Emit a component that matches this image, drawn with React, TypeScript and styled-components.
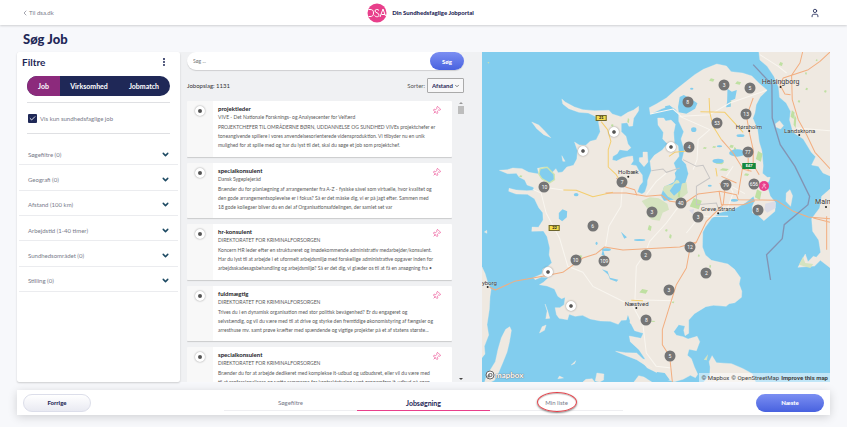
import React from "react";
import styled, { createGlobalStyle, css } from "styled-components";
import { Check, ChevronDown, ChevronLeft, EllipsisVertical, Pin, User } from "lucide-react";

const navy = "#1f2857";
const pink = "#e83f8b";
const grey = "#777a8a";

const GlobalStyle = createGlobalStyle`
  *, *::before, *::after { box-sizing: border-box; }
  body {
    margin: 0;
    background: #f7f8fb;
    color: ${navy};
    font-family: Lato, "Liberation Sans", sans-serif;
    font-size: 6px;
  }
  button, input, select { font-family: inherit; margin: 0; }
  h1, h2, h3, p { margin: 0; }
`;

const Page = styled.div`
  min-height: 100vh;
  display: flex;
  flex-direction: column;
`;

const Header = styled.header`
  display: grid;
  grid-template-columns: 1fr auto 1fr;
  align-items: center;
  height: 25px;
  padding: 0 27px 0 21px;
  background: #fff;
  box-shadow: 0 1px 2px rgba(0, 0, 0, 0.16);
`;

const BackLink = styled.a`
  display: flex;
  align-items: center;
  color: ${grey};
  text-decoration: none;
`;

const Brand = styled.div`
  display: flex;
  align-items: center;
  gap: 5px;
  font-weight: 900;
`;

const AccountButton = styled.button`
  justify-self: end;
  display: flex;
  padding: 0;
  border: 0;
  background: none;
  color: ${navy};
`;

const PageTitle = styled.h1`
  height: 27px;
  padding-left: 23px;
  font-size: 13px;
  line-height: 28px;
  font-weight: 900;
`;

const Columns = styled.main`
  display: grid;
  grid-template-columns: 163fr 302fr 348fr;
  height: 330px;
  margin: 0 17px;
  background: #f0f1f3;
`;

const FilterPanel = styled.section`
  background: #fff;
  border-radius: 2px;
  box-shadow: 0 1px 2px rgba(0, 0, 0, 0.18);
`;

const PanelHeader = styled.div`
  display: flex;
  align-items: center;
  justify-content: space-between;
  height: 20px;
  padding: 0 11px 0 5px;
`;

const PanelTitle = styled.h2`
  font-size: 10px;
  line-height: 20px;
  font-weight: 700;
`;

const IconButton = styled.button`
  display: flex;
  padding: 0;
  border: 0;
  background: none;
  color: ${navy};
`;

const Tabs = styled.div`
  display: grid;
  grid-template-columns: 33fr 58fr 52fr;
  height: 20px;
  margin: 4px 10px 6px;
  border-radius: 10px;
  overflow: hidden;
  background: ${navy};
`;

const Tab = styled.button<{ $active?: boolean }>`
  padding: 0;
  border: 0;
  background: ${(p) => (p.$active ? "#8c2a7c" : "transparent")};
  color: #fff;
  font-size: 7px;
  font-weight: 700;
`;

const CheckRow = styled.label`
  display: flex;
  align-items: center;
  gap: 3px;
  height: 32px;
  margin: 0 10px;
  padding: 0 1px;
  border-top: 1px solid #dfe0e3;
  border-bottom: 1px solid #dfe0e3;
  color: ${grey};
`;

const CheckBox = styled.span`
  display: grid;
  width: 9px;
  height: 9px;
  & > * { grid-area: 1 / 1; }
  input {
    appearance: none;
    width: 9px;
    height: 9px;
    margin: 0;
    border-radius: 1px;
    background: ${navy};
  }
  svg { place-self: center; color: #fff; pointer-events: none; }
`;

const FilterList = styled.div`
  display: grid;
  grid-auto-rows: 1fr;
  height: 152px;
  margin: 6px 2px 0;
`;

const FilterRow = styled.button`
  display: flex;
  align-items: center;
  justify-content: space-between;
  padding: 4px 8px 0 9px;
  border: 0;
  border-bottom: 1px solid #ebecef;
  background: none;
  color: ${grey};
  font-size: 6px;
  text-align: left;
  svg { color: #1d4a63; }
`;

const Results = styled.section`
  display: flex;
  flex-direction: column;
  min-width: 0;
  min-height: 0;
  padding: 0 18px 0 7px;
`;

const SearchForm = styled.form`
  display: flex;
  flex: none;
  height: 18px;
  border-radius: 9px;
  background: #fff;
  box-shadow: 0 1px 1px rgba(0, 0, 0, 0.14);
`;

const SearchInput = styled.input`
  flex: 1;
  min-width: 0;
  padding: 0 6px;
  border: 0;
  background: none;
  font-size: 5px;
  outline: none;
  &::placeholder { color: #777; opacity: 1; }
`;

const pill = css`
  border: 0;
  border-radius: 9px;
  height: 18px;
  padding: 0;
  font-size: 6px;
  font-weight: 900;
`;

const PrimaryButton = styled.button<{ $width: number }>`
  ${pill}
  width: ${(p) => p.$width}px;
  background: linear-gradient(#7b8ff2, #4862df);
  color: #fff;
`;

const SecondaryButton = styled.button`
  ${pill}
  width: 68px;
  border: 1px solid #dcdeea;
  background: linear-gradient(#fff, #e9eaf2);
  color: ${navy};
`;

const ResultsBar = styled.div`
  display: flex;
  flex: none;
  align-items: center;
  justify-content: space-between;
  height: 15px;
  margin: 8px 0;
  color: #333;
`;

const SortLabel = styled.label`
  display: flex;
  align-items: center;
  gap: 2px;
  color: #555;
`;

const SelectWrap = styled.span`
  display: grid;
  align-items: center;
  width: 37px;
  height: 15px;
  & > * { grid-area: 1 / 1; }
  svg { justify-self: end; margin-right: 4px; pointer-events: none; color: #555; }
`;

const SortSelect = styled.select`
  appearance: none;
  width: 100%;
  height: 15px;
  padding: 0 0 0 4px;
  border: 1px solid #aaa;
  border-radius: 1px;
  background: #f7f7f8;
  color: ${navy};
  font-size: 6px;
  font-weight: 700;
`;

const ScrollArea = styled.div`
  display: flex;
  flex: 1;
  min-height: 0;
  gap: 6px;
`;

const JobViewport = styled.div`
  flex: 1;
  min-width: 0;
  overflow: hidden;
`;

const JobList = styled.div`
  display: grid;
  grid-auto-rows: 1fr;
  gap: 6px;
  height: 302px;
`;

const Card = styled.article`
  display: grid;
  grid-template-columns: 26px minmax(0, 1fr) 14px;
  border-radius: 1px;
  overflow: hidden;
  background: linear-gradient(to right, #f8f8f8 26px, #fff 26px);
  box-shadow: 0 1px 1px rgba(0, 0, 0, 0.16);
`;

const dot = css`
  width: 10px;
  height: 10px;
  border: 3px solid #fff;
  border-radius: 50%;
  background: #555;
  box-shadow: 0 0 2px rgba(0, 0, 0, 0.4);
`;

const CardDot = styled.span`
  ${dot}
  margin: 5px 8px;
`;

const CardText = styled.div`
  padding: 3px 0 0 5px;
  color: #5a5a5a;
  font-size: 5px;
  line-height: 9px;
  white-space: pre;
`;

const JobTitle = styled.h3`
  color: #1b1b1f;
  font-size: 6px;
  line-height: 9px;
  font-weight: 700;
`;

const Company = styled.p`
  margin-bottom: 1px;
`;

const PinButton = styled.button`
  align-self: start;
  justify-self: end;
  display: flex;
  margin: 5px 11px 0 0;
  padding: 0;
  border: 0;
  background: none;
  color: #ed5d9c;
  svg { transform: rotate(45deg); }
`;

const Scrollbar = styled.div`
  display: flex;
  flex-direction: column;
  align-items: center;
  width: 6px;
  padding: 1px 0 2px;
  svg { flex: none; }
`;

const Thumb = styled.div`
  width: 6px;
  height: 8px;
  margin: 2px 0 auto;
  background: #bdbdbd;
`;

const MapPanel = styled.section`
  position: relative;
  min-width: 0;
  overflow: hidden;
  background: #82cdee;
`;

const MapDrawing = styled.svg`
  display: block;
  width: 100%;
  height: 100%;
`;

type At = { $x: number; $y: number };

const spot = css<At>`
  position: absolute;
  left: calc(100% * ${(p) => p.$x - 8} / 1042);
  top: calc(100% * ${(p) => p.$y - 7} / 990);
  transform: translate(-50%, -50%);
`;

const Cluster = styled.button<At & { $home?: boolean }>`
  ${spot}
  display: flex;
  align-items: center;
  justify-content: center;
  width: ${(p) => (p.$home ? 10 : 11)}px;
  height: ${(p) => (p.$home ? 10 : 11)}px;
  padding: 0;
  border: 0;
  border-radius: 50%;
  background: ${(p) => (p.$home ? pink : "#757575")};
  color: #fff;
  font-family: Roboto, sans-serif;
  font-size: 5px;
  line-height: 11px;
`;

const SinglePin = styled.button<At>`
  ${dot}
  ${spot}
  padding: 0;
  background-clip: padding-box;
`;

const Place = styled.span<At & { $big?: boolean }>`
  ${spot}
  color: #333;
  font-family: Roboto, sans-serif;
  font-size: ${(p) => (p.$big ? 7 : 6)}px;
  line-height: 8px;
  white-space: nowrap;
  text-shadow: 0 0 1px #fff;
`;

const RoadSign = styled.span<At & { $green?: boolean }>`
  ${spot}
  padding: 0 2px;
  border: 1px solid ${(p) => (p.$green ? "#15883e" : "#6b6430")};
  background: ${(p) => (p.$green ? "#15883e" : "#f3dc4e")};
  color: ${(p) => (p.$green ? "#fff" : "#222")};
  font-size: 4px;
  line-height: 4px;
  font-weight: 900;
`;

const MapboxMark = styled.a`
  position: absolute;
  left: 3px;
  bottom: 2px;
  display: flex;
  align-items: center;
  color: #fff;
  font-size: 8px;
  line-height: 10px;
  font-weight: 700;
  text-decoration: none;
  text-shadow: 0 0 1px #666, 0 0 1px #666;
`;

const Attribution = styled.div`
  position: absolute;
  right: 0;
  bottom: 0;
  display: flex;
  gap: 2px;
  padding: 0 2px;
  background: rgba(255, 255, 255, 0.5);
  font-family: Roboto, sans-serif;
  font-size: 6px;
  line-height: 9px;
  a { color: #404040; text-decoration: none; }
  a:last-child { font-weight: 700; }
`;

const Footer = styled.footer`
  display: grid;
  grid-template-columns: 1fr minmax(0, 399px) 1fr;
  align-items: center;
  height: 25px;
  margin: 8px 17px 12px;
  padding: 0 6px;
  background: #fff;
  box-shadow: 0 2px 10px rgba(0, 0, 0, 0.16);
  & > :last-child { justify-self: end; }
`;

const Steps = styled.nav`
  display: grid;
  grid-template-columns: repeat(3, 1fr);
`;

const Step = styled.a<{ $active?: boolean }>`
  position: relative;
  height: 16px;
  border-bottom: 1px solid ${(p) => (p.$active ? pink : "#eeeef1")};
  color: ${(p) => (p.$active ? navy : grey)};
  font-size: ${(p) => (p.$active ? 7 : 6)}px;
  line-height: 16px;
  font-weight: ${(p) => (p.$active ? 700 : 400)};
  text-align: center;
  text-decoration: none;
`;

const Highlight = styled.span`
  position: absolute;
  top: 50%;
  left: 50%;
  width: 40px;
  height: 20px;
  border: 1px solid #e2434b;
  border-radius: 50%;
  box-shadow: 0 1px 2px rgba(0, 0, 0, 0.5), inset 0 1px 1px rgba(0, 0, 0, 0.25);
  transform: translate(-50%, -50%);
  pointer-events: none;
`;

const filters = [
  "Søgefiltre (0)",
  "Geografi (0)",
  "Afstand (100 km)",
  "Arbejdstid (1-40 timer)",
  "Sundhedsområdet (0)",
  "Stilling (0)",
];

const jobs = [
  {
    title: "projektleder",
    company: "VIVE - Det Nationale Forsknings- og Analysecenter for Velfærd",
    text: "PROJEKTCHEFER TIL OMRÅDERNE BØRN, UDDANNELSE OG SUNDHED VIVEs projektchefer er\ntoneangivende spillere i vores anvendelsesorienterede vidensproduktion. Vi tilbyder nu en unik\nmulighed for at spille med og har du lyst til det, skal du søge et job som projektchef.",
  },
  {
    title: "specialkonsulent",
    company: "Dansk Sygeplejeråd",
    text: "Brænder du for planlægning af arrangementer fra A-Z - fysiske såvel som virtuelle, hvor kvalitet og\nden gode arrangementsoplevelse er i fokus? Så er det måske dig, vi er på jagt efter. Sammen med\n18 gode kollegaer bliver du en del af Organisationsafdelingen, der samlet set var",
  },
  {
    title: "hr-konsulent",
    company: "DIREKTORATET FOR KRIMINALFORSORGEN",
    text: "Koncern HR leder efter en struktureret og imødekommende administrativ medarbejder/konsulent.\nHar du lyst til at arbejde i et uformelt arbejdsmiljø med forskellige administrative opgaver inden for\narbejdsskadesagsbehandling og arbejdsmiljø? Så er det dig, vi glæder os til at få en ansøgning fra •",
  },
  {
    title: "fuldmægtig",
    company: "DIREKTORATET FOR KRIMINALFORSORGEN",
    text: "Trives du i en dynamisk organisation med stor politisk bevågenhed? Er du engageret og\nselvstændig, og vil du være med til at drive og styrke den fremtidige økonomistyring af fængsler og\narresthuse mv. samt prøve kræfter med spændende og vigtige projekter på et af statens største...",
  },
  {
    title: "specialkonsulent",
    company: "DIREKTORATET FOR KRIMINALFORSORGEN",
    text: "Brænder du for at arbejde dedikeret med komplekse it-udbud og udbudsret, eller vil du være med\ntil at professionalisere og sætte rammerne for kontraktstyring samt gennemføre it-udbud på egen",
  },
];

const clusters: [number, number, number][] = [
  [733, 105, 3], [810, 114, 5], [624, 157, 8], [799, 192, 13], [712, 220, 53],
  [628, 293, 4], [804, 308, 77], [428, 396, 7], [195, 413, 10], [739, 407, 79],
  [822, 402, 656], [603, 459, 40], [517, 488, 3], [655, 501, 3], [833, 482, 8],
  [339, 530, 6], [631, 591, 12], [498, 615, 2], [288, 632, 10], [374, 633, 109],
  [680, 670, 2], [568, 720, 3], [500, 812, 8], [571, 920, 5],
];

const singles: [number, number][] = [[404, 247], [309, 303], [573, 291], [207, 666], [273, 770]];

const places: [number, number, string, boolean?][] = [
  [902, 97, "Helsingborg", true], [807, 231, "Hørsholm"], [959, 243, "Landskrona"],
  [446, 367, "Holbæk"], [715, 477, "Greve Strand"], [1032, 456, "Malm", true],
  [28, 700, "lyborg"], [471, 762, "Næstved"],
];

const towns: [number, number][] = [
  [902, 112], [808, 244], [958, 256], [446, 381], [715, 491], [1038, 472], [25, 712], [470, 775],
];

const greens: [number, number, number, number][] = [
  [838, 320, 10, 16], [648, 462, 18, 17], [755, 290, 7, 5], [748, 160, 7, 9], [720, 340, 13, 4],
  [765, 300, 4, 8], [790, 350, 6, 6], [703, 292, 6, 3], [835, 435, 10, 16], [572, 560, 4, 7],
  [560, 542, 4, 4], [510, 535, 6, 9], [657, 618, 3, 4], [691, 650, 3, 5], [492, 725, 13, 7],
  [398, 227, 4, 4], [446, 213, 3, 8], [124, 380, 5, 3], [938, 195, 6, 13], [945, 215, 4, 20],
  [903, 43, 6, 6], [978, 71, 3, 4], [1010, 32, 3, 3], [980, 118, 4, 4], [1036, 125, 4, 4],
  [957, 155, 4, 4], [675, 295, 6, 3], [733, 360, 14, 4], [598, 432, 4, 16], [520, 815, 7, 2],
  [580, 758, 4, 3], [303, 621, 5, 5], [696, 91, 8, 5], [775, 100, 9, 5], [800, 375, 8, 4],
];

const lakes: [number, number, number, number][] = [
  [642, 240, 8, 7], [782, 258, 12, 4], [772, 310, 24, 11], [715, 334, 17, 7], [636, 117, 5, 3],
  [290, 435, 7, 5], [351, 581, 3, 5], [380, 600, 14, 4], [480, 571, 17, 3], [763, 452, 12, 4],
  [719, 290, 8, 3], [690, 408, 6, 3],
];

function MapArt() {
  return (
    <MapDrawing viewBox="8 7 1042 990" preserveAspectRatio="none" aria-hidden="true">
      <g fill="#efe9e1" stroke="#f7f1e6" strokeWidth="1">
        <path d="M247 148L257 157 285 172 310 180 345 183 388 182 398 193 424 201 445 188 462 181 477 170 477 183 462 206 459 229 448 230 443 219 425 221 425 246 439 260 445 283 454 294 443 303 420 300 413 312 400 320 398 331 411 334 428 325 443 321 459 319 461 334 453 345 470 348 477 362 488 376 489 397 480 408 473 427 487 433 496 427 503 405 504 391 515 363 511 334 524 317 548 301 563 282 549 268 551 248 535 226 534 205 552 205 558 214 574 211 587 224 582 249 584 279 595 288 598 320 582 340 593 369 582 397 553 411 543 438 553 454 580 451 606 438 623 429 618 396 626 372 619 344 607 331 614 302 604 268 612 246 597 215 597 193 587 178 570 168 545 178 512 194 509 174 530 163 560 145 587 121 620 95 645 75 671 59 711 43 740 49 754 66 788 70 816 79 836 99 862 122 841 142 829 165 825 190 819 206 833 239 838 277 846 303 850 348 848 371 862 383 871 383 866 397 850 403 865 419 871 439 887 459 885 485 852 513 833 495 818 490 817 471 825 453 821 440 797 459 765 477 720 489 696 506 677 532 669 547 668 592 677 616 695 632 744 643 764 659 782 684 778 703 786 725 785 743 765 759 748 762 739 770 701 767 678 771 644 792 627 811 627 851 616 858 612 842 616 829 597 825 582 846 590 857 610 861 625 868 652 860 660 876 650 903 628 899 623 917 635 927 644 952 654 974 647 984 632 977 610 989 584 996 563 990 548 979 526 966 503 955 481 928 497 929 478 900 452 876 449 859 484 866 491 851 465 843 455 824 443 811 425 812 416 824 392 815 363 814 332 808 309 797 287 800 269 794 264 810 239 806 231 795 227 774 241 774 254 765 257 743 246 747 235 740 225 718 203 709 180 705 192 698 207 684 186 682 167 690 162 684 187 673 190 658 207 649 217 639 209 616 211 595 203 561 192 544 157 545 158 532 177 533 191 511 190 489 178 474 165 447 144 434 110 433 88 425 89 416 110 421 142 423 164 422 162 413 143 406 136 391 119 382 111 371 85 372 60 362 84 360 100 355 128 357 148 368 178 373 174 356 197 352 218 369 229 357 236 369 249 367 262 352 282 347 292 328 294 303 285 277 299 286 319 287 332 275 350 270 362 246 357 219 358 205 326 190 298 188 268 177 250 163Z" />
        <path d="M837 7L840 31 862 50 882 80 896 113 899 143 919 160 932 185 929 211 939 247 953 257 970 268 994 308 1007 321 995 346 1015 350 1029 370 1050 379V7Z" />
        <path d="M1050 418L1025 440 1019 475 995 507 998 545 1016 571 1022 608 1009 623 1000 620 984 636 976 613 954 653 1004 649 1021 632 1050 654Z" />
        <path d="M8 652L17 671 25 698 35 720 32 741 30 779 23 825 28 856 15 890 17 913 8 924Z" />
        <path d="M91 831L96 842 90 878 83 907 71 937 57 970 45 992 35 997 16 997 21 980 48 936 56 899 66 864 79 839Z" />
        <path d="M157 217L178 226 193 241 214 264 193 255 172 237Z" />
        <path d="M490 307L503 307 505 337 493 351 479 335 479 324 490 323Z" />
        <path d="M247 318L257 335 250 335Z M197 763L205 785 211 806 199 807 203 784Z M180 850L188 831 200 826 195 842Z" />
        <path d="M887 222L899 213 911 228 902 238 888 232Z M919 430L930 420 938 438 932 470 918 455Z" />
        <path d="M408 905L438 909 471 910 490 928 497 941 516 954 500 949 471 930 440 918Z" />
        <path d="M672 997L690 977 691 952 688 936 697 918 710 939 755 942 790 957 817 972 827 997Z" />
        <path d="M352 970L373 973 372 991 360 997 347 994Z M463 997L477 978 493 982 516 997Z M275 946L289 933 285 942Z M240 979L252 985 235 987Z M15 547L22 542 23 551Z M319 989L338 987 345 997 310 997Z" />
      </g>
      <g fill="#d5e3c0">
        <path d="M486 454L511 443 537 446 563 462 568 480 549 489 540 513 517 510 503 498 508 483Z" />
        <path d="M549 422L554 409 578 404 595 386 601 404 620 397 624 430 605 446 586 452 565 441Z" />
        <path d="M957 645L969 622 976 640 1000 643 991 655Z M672 930L685 914 681 932Z" />
      </g>
      <g fill="#bfe0a2">
        {greens.map(([x, y, rx, ry]) => (
          <path key={`${x}-${y}`} d={`M${x - rx} ${y + ry / 2}L${x - rx / 3} ${y - ry} ${x + rx} ${y - ry / 2} ${x + rx / 2} ${y + ry}Z`} />
        ))}
      </g>
      <path d="M856 462L885 455 887 475 862 489 854 480Z M628 481L643 478 640 495Z" fill="#dcdce6" />
      <g fill="#82cdee">
        {lakes.map(([x, y, rx, ry]) => (
          <ellipse key={`${x}-${y}`} cx={x} cy={y} rx={rx} ry={ry} />
        ))}
        <path d="M600 142L612 136 630 145 653 161 646 177 620 192 597 188 595 172Z" />
        <path d="M743 117L756 126 771 121 766 147 752 153 753 171 739 173 742 155Z" />
        <path d="M556 170L570 167 586 183 580 201 560 190 Z" />
        <path d="M238 490L249 479 263 485 262 503 248 515 238 507Z" />
        <path d="M424 546L442 563 434 567Z M370 599L376 619 366 615Z M367 659L384 665 391 684 416 690 411 696 391 689 386 675Z" />
        <path d="M570 423L585 402 607 399 602 422 583 438Z M585 370L600 350 624 370 616 400 590 390Z" />
        <path d="M421 832L439 817 445 796 451 814 444 839 452 853 437 844Z" />
        <path d="M532 967L555 970 570 990 540 997 525 983Z" />
      </g>
      <path d="M178 373L182 357 203 353 224 374 225 390 210 400 187 387Z" fill="#82cdee" stroke="#cfe4ae" strokeWidth="4" />
      <g fill="none" stroke="#f9f6f0" strokeWidth="3" strokeLinejoin="round">
        <path d="M160 419L185 430 200 490 240 565 265 650 310 668 340 710 410 745 460 770 490 825 500 910 530 950 575 955" />
        <path d="M195 413L250 421M428 410L424 470 388 530 378 590M560 370L530 395 500 435" />
        <path d="M603 462L560 520 510 575 497 610 470 650 466 750 580 753" />
        <path d="M512 193L580 178 605 200 690 195 750 160 860 122M600 200L690 240 655 270 652 330 640 360" />
        <path d="M740 485L760 430 740 385M760 350L740 380M745 500L660 500 620 550" />
        <path d="M920 70L895 50 840 15M950 235L1050 243M795 432L755 410" />
      </g>
      <g fill="none" stroke="#f4ce6e" strokeWidth="3" strokeLinejoin="round">
        <path d="M365 216L384 240 394 275 386 300 386 352 410 375 425 400" />
        <path d="M252 421L290 422 340 441 400 428M688 145L690 188 700 230 725 270M662 186L735 188 790 248M568 320L585 308 628 303M708 355L712 380M455 752L490 753" />
      </g>
      <g fill="none" stroke="#f2ae80" strokeWidth="3" strokeLinejoin="round">
        <path d="M378 430L440 430 500 440 545 436 570 455 615 460 655 433 720 425 770 435 775 450 890 452 940 485 985 502 1050 507" />
        <path d="M410 385L440 413 465 420 472 437M718 425L725 465 790 465 825 453" />
        <path d="M30 712L48 721 105 695 190 680 250 668 310 625 350 612 375 592 430 601 600 592 650 577 680 515 730 465 735 425 720 400" />
        <path d="M650 577L630 600 620 655 590 705 565 785 548 840 548 885 570 920 578 997" />
        <path d="M820 145L800 200 810 255 820 300 820 345 838 375M725 270L760 310 788 355 775 435M805 325L805 365M725 380L770 400M788 358L815 365" />
        <path d="M968 7L960 40 935 77 937 150 955 210 980 255 1005 308 1050 357M1050 7L1020 35 985 60 935 77 910 85 900 105 915 133 932 135" />
        <path d="M1000 505L1050 518M1040 500L1040 600" />
      </g>
      <path d="M515 363L550 358 560 368 600 355M610 330L650 350 670 347 690 385 650 410 650 465 710 460 715 475" fill="none" stroke="#c8c6c5" strokeWidth="3" />
      <path d="M820 45L876 105 877 205 901 285 945 350 989 440 984 465 913 525 907 567 860 615 872 691" fill="none" stroke="#8394b3" strokeWidth="4" />
      <g fill="#222">
        {towns.map(([x, y]) => <circle key={`${x}-${y}`} cx={x} cy={y} r="3" />)}
      </g>
      <path d="M24 38L30 37 28 42Z" fill="#cfe0ad" />
    </MapDrawing>
  );
}

function DsaLogo() {
  return (
    <svg width="20" height="20" viewBox="0 0 40 40" aria-label="DSA" role="img">
      <circle cx="20" cy="20" r="19" fill={pink} />
      <g fill="none" stroke="#fff" strokeWidth="2">
        <path d="M3 13H6C11 13 13 15 13 20S11 27 6 27H3" />
        <path d="M24 15C22 12 16 12 16 16S24 19 24 24 17 28 15 25" />
        <path d="M26 28L32 12 37 26M29 23H36" />
      </g>
    </svg>
  );
}

export default function App() {
  return (
    <Page>
      <GlobalStyle />
      <Header>
        <BackLink href="#dsa"><ChevronLeft size={8} />Til dsa.dk</BackLink>
        <Brand><DsaLogo />Din Sundhedsfaglige Jobportal</Brand>
        <AccountButton aria-label="Profil"><User size={10} /></AccountButton>
      </Header>
      <PageTitle>Søg Job</PageTitle>
      <Columns>
        <FilterPanel>
          <PanelHeader>
            <PanelTitle>Filtre</PanelTitle>
            <IconButton aria-label="Flere valg"><EllipsisVertical size={10} strokeWidth={3} /></IconButton>
          </PanelHeader>
          <Tabs>
            <Tab $active>Job</Tab>
            <Tab>Virksomhed</Tab>
            <Tab>Jobmatch</Tab>
          </Tabs>
          <CheckRow>
            <CheckBox>
              <input type="checkbox" defaultChecked />
              <Check size={7} strokeWidth={3} />
            </CheckBox>
            Vis kun sundhedsfaglige job
          </CheckRow>
          <FilterList>
            {filters.map((name) => (
              <FilterRow key={name}>{name}<ChevronDown size={9} strokeWidth={4} /></FilterRow>
            ))}
          </FilterList>
        </FilterPanel>
        <Results>
          <SearchForm onSubmit={(e) => e.preventDefault()}>
            <SearchInput aria-label="Søg" placeholder="Søg ..." />
            <PrimaryButton $width={34}>Søg</PrimaryButton>
          </SearchForm>
          <ResultsBar>
            <span>Jobopslag: 1131</span>
            <SortLabel>
              Sorter:
              <SelectWrap>
                <SortSelect><option>Afstand</option></SortSelect>
                <ChevronDown size={6} strokeWidth={3} />
              </SelectWrap>
            </SortLabel>
          </ResultsBar>
          <ScrollArea>
            <JobViewport>
              <JobList>
                {jobs.map((job, i) => (
                  <Card key={i}>
                    <CardDot />
                    <CardText>
                      <JobTitle>{job.title}</JobTitle>
                      <Company>{job.company}</Company>
                      <p>{job.text}</p>
                    </CardText>
                    <PinButton aria-label="Gem job"><Pin size={9} /></PinButton>
                  </Card>
                ))}
              </JobList>
            </JobViewport>
            <Scrollbar>
              <svg width="4" height="2" viewBox="0 0 4 2"><path d="M0 2L2 0 4 2Z" fill="#999" /></svg>
              <Thumb />
              <svg width="4" height="2" viewBox="0 0 4 2"><path d="M0 0L2 2 4 0Z" fill="#444" /></svg>
            </Scrollbar>
          </ScrollArea>
        </Results>
        <MapPanel aria-label="Kort">
          <MapArt />
          {places.map(([x, y, name, big]) => <Place key={name} $x={x} $y={y} $big={big}>{name}</Place>)}
          <RoadSign $x={365} $y={205}>21</RoadSign>
          <RoadSign $x={225} $y={535}>22</RoadSign>
          <RoadSign $x={808} $y={349} $green>E47</RoadSign>
          {clusters.map(([x, y, n]) => <Cluster key={`${x}-${y}`} $x={x} $y={y}>{n}</Cluster>)}
          {singles.map(([x, y]) => <SinglePin key={`${x}-${y}`} $x={x} $y={y} aria-label="Job" />)}
          <Cluster $x={851} $y={410} $home aria-label="Min placering"><User size={6} /></Cluster>
          <MapboxMark href="#mapbox">
            <svg width="10" height="10" viewBox="0 0 20 20">
              <circle cx="10" cy="10" r="8" fill="#fff" stroke="#666" strokeWidth="2" />
              <path d="M5 15C4 9 8 5 12 6S16 13 12 14 7 15 5 15Z" fill="#777" />
              <path d="M11 7L12 9 14 10 12 11 11 13 10 11 8 10 10 9Z" fill="#fff" />
            </svg>
            mapbox
          </MapboxMark>
          <Attribution>
            <a href="#mb">© Mapbox</a><a href="#osm">© OpenStreetMap</a><a href="#improve">Improve this map</a>
          </Attribution>
        </MapPanel>
      </Columns>
      <Footer>
        <SecondaryButton>Forrige</SecondaryButton>
        <Steps>
          <Step href="#filtre">Søgefiltre</Step>
          <Step href="#job" $active>Jobsøgning</Step>
          <Step href="#liste">Min liste<Highlight /></Step>
        </Steps>
        <PrimaryButton $width={68}>Næste</PrimaryButton>
      </Footer>
    </Page>
  );
}
